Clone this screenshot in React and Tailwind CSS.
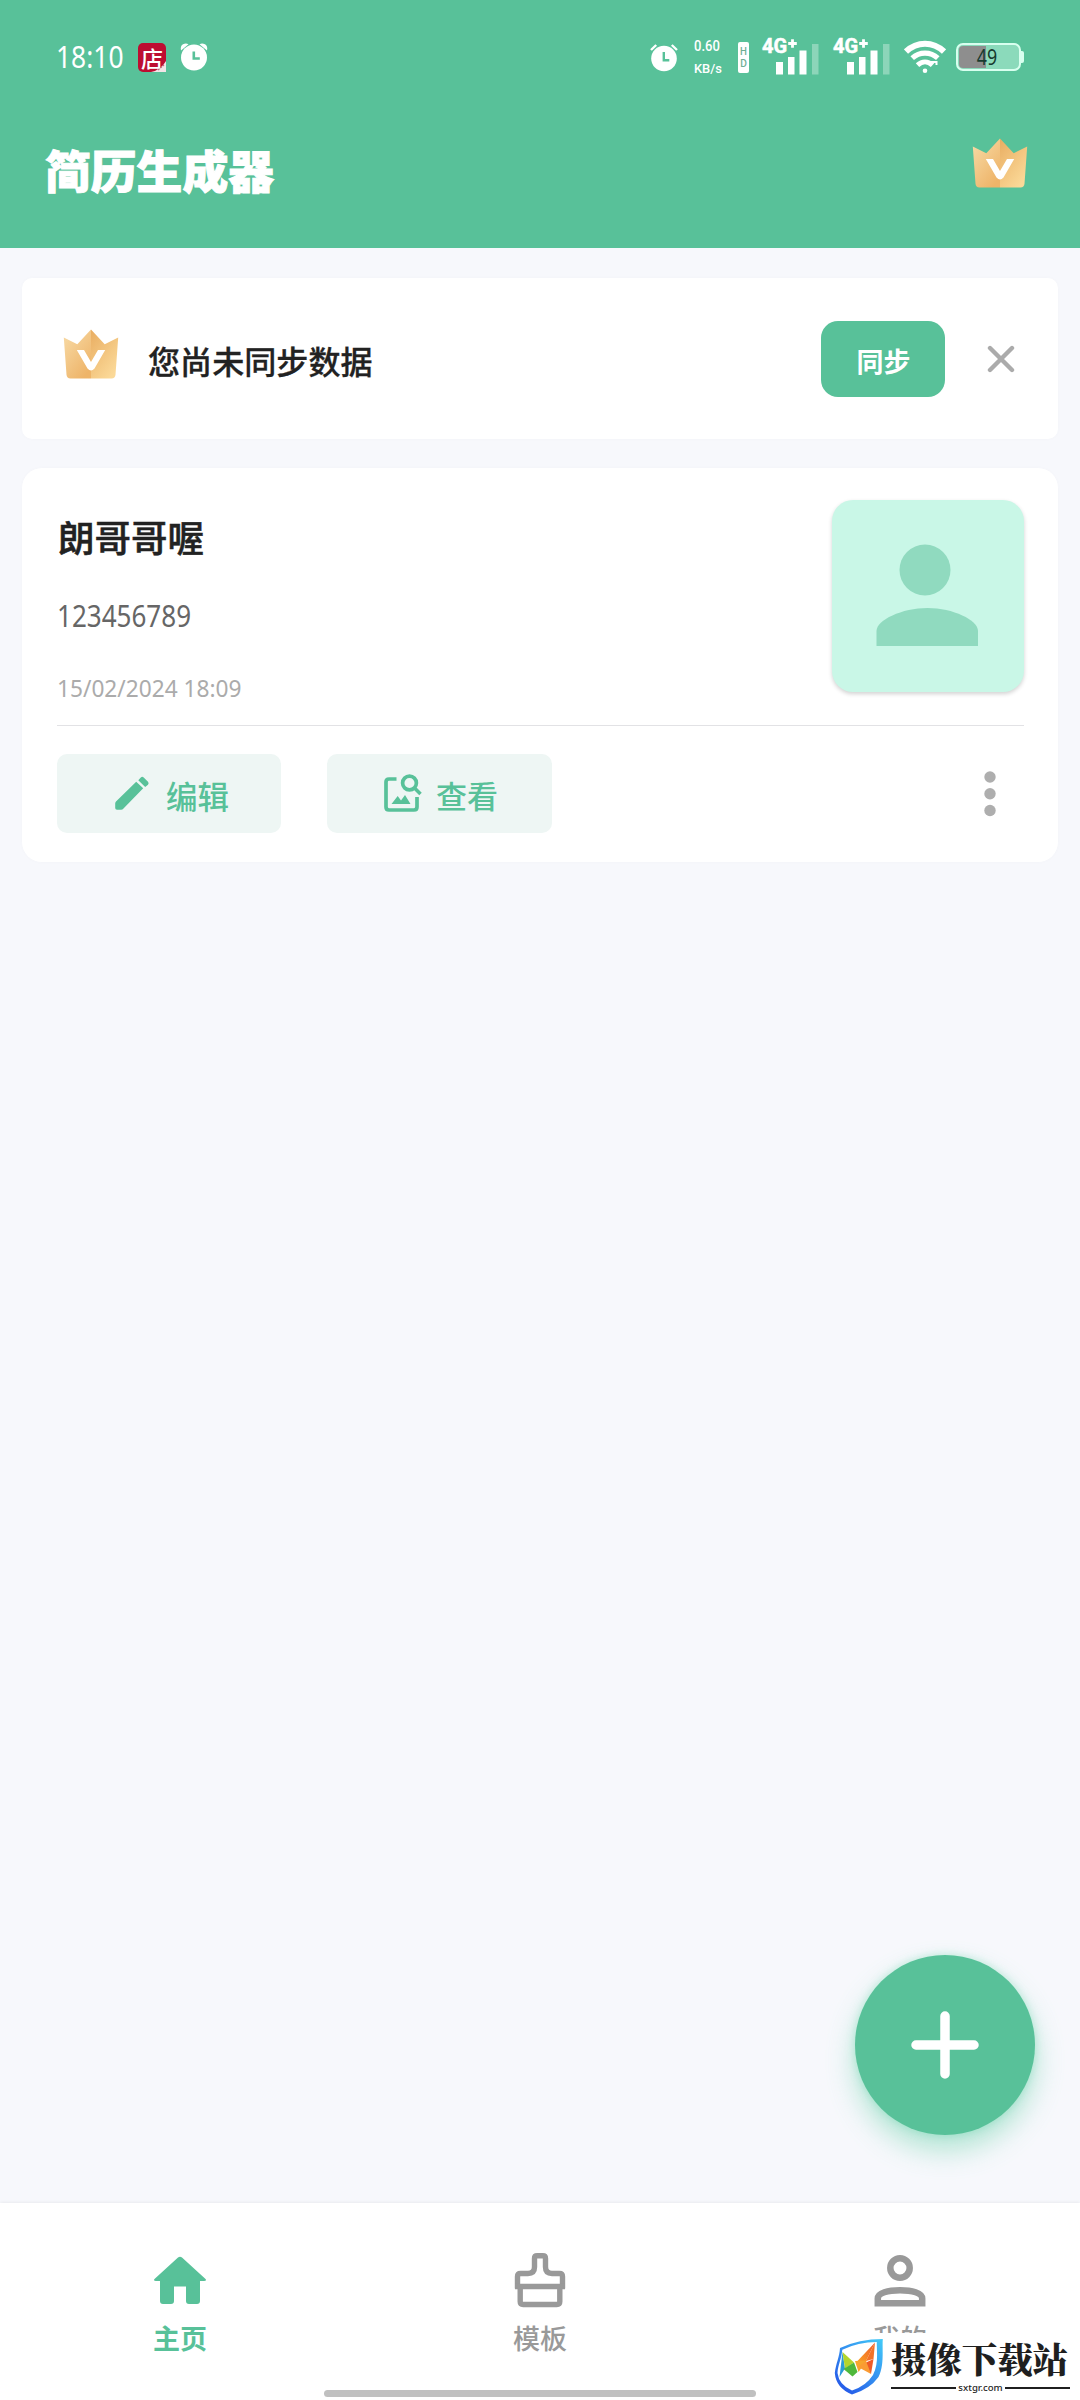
import React, { useId } from "react";

function AlarmIcon({ className }) {
  return (
    <svg viewBox="0 0 28 28" className={className}>
      <path d="M1 7.5 Q0 3 3 1.2 Q6 0 8.5 1.2 Z M27 7.5 Q28 3 25 1.2 Q22 0 19.5 1.2 Z" fill="#fff" />
      <circle cx="14" cy="14.5" r="13" fill="#fff" />
      <path d="M13.8 8.5v7h6" fill="none" stroke="#58c199" strokeWidth="2.6" />
    </svg>
  );
}

function BellAlarmIcon({ className }) {
  return (
    <svg viewBox="0 0 28 28" className={className}>
      <circle cx="14" cy="15" r="12.8" fill="#fff" />
      <path d="M1 6.5 6.2 1.5 M27 6.5 21.8 1.5" stroke="#fff" strokeWidth="2.4" />
      <path d="M13.8 8.5v8.2h5.5" fill="none" stroke="#58c199" strokeWidth="2.4" />
    </svg>
  );
}

function Signal() {
  return (
    <div className="relative h-[36px] w-[57px]">
      <span className="absolute -top-[3px] left-0 font-['Roboto',sans-serif] text-[20px] leading-[20px] font-bold text-white [-webkit-text-stroke:0.5px_white]">
        4G
      </span>
      <svg viewBox="0 0 57 36" className="absolute inset-0 h-full w-full">
        <path d="M30.500 .2v8.600M26.200 4.500h8.600" stroke="#fff" strokeWidth="2.800" />
        <path d="M14 23h7v12.500h-7zM26 18h6.500v17.500h-6.500zM37.500 11.500h7v24h-7z" fill="#fff" />
        <path d="M50 5h6.500v30.500h-6.500z" fill="#fff" opacity=".32" />
      </svg>
    </div>
  );
}

function WifiIcon({ className }) {
  return (
    <svg viewBox="0 0 42 34" className={className} fill="none" stroke="#fff" strokeWidth="6">
      <path d="M2 11.500C13 1 29 1 40 11.500" />
      <path d="M8.200 18.200C15.500 11.500 26.500 11.500 33.800 18.200" strokeWidth="5.200" />
      <path d="M13.500 25.200C18 21 24 21 28.500 25.200" strokeWidth="5" />
      <path d="M27 22h5.500v3" strokeWidth="2" />
      <circle cx="21" cy="30.800" r="2.300" fill="#fff" stroke="none" />
    </svg>
  );
}

function Crown({ className }) {
  const id = useId();
  const left = id + "l";
  const right = id + "r";
  return (
    <svg viewBox="0 0 56 50" className={className}>
      <defs>
        <linearGradient id={left} x1="0" y1="0" x2=".7" y2="1">
          <stop offset="0" stopColor="#f8dca8" />
          <stop offset="1" stopColor="#eeb469" />
        </linearGradient>
        <linearGradient id={right} x1="0" y1="0" x2=".7" y2="1">
          <stop offset="0" stopColor="#e9ad61" />
          <stop offset="1" stopColor="#fbd998" />
        </linearGradient>
      </defs>
      <path d="M28 .5V49.500H7.500Q3.800 49.500 3.500 45.800L.8 8.500 14.300 15.200Z" fill={`url(#${left})`} />
      <path d="M28 .5V49.500H48.500Q52.200 49.500 52.500 45.800L55.200 8.500 41.700 15.200Z" fill={`url(#${right})`} />
      <path d="M13.800 21H21L28 33 35 21H42.200L31.500 39.500Q28 43.500 24.500 39.500Z" fill="#fff" />
    </svg>
  );
}

function StatusBar() {
  return (
    <div className="flex h-[114px] items-center pl-[56px] pr-[56px] text-white">
      <span className="w-[82px] origin-left scale-x-[0.88] whitespace-nowrap font-['Noto_Sans',sans-serif] text-[30px] leading-[42px]">
        18:10
      </span>
      <div className="relative h-[29px] w-[28px] rounded-[5px] bg-[#bd0d31]">
        <span className="absolute left-[3px] top-0 text-[22px] leading-[28px] font-medium">店</span>
        <svg viewBox="0 0 28 29" className="absolute inset-0 h-full w-full">
          <path d="M28 18V29H13Q23 27 28 18Z" fill="#f3e5e7" />
          <path d="M20 27l6-5" stroke="#bd6a7c" strokeWidth="1.200" strokeDasharray="2 1" />
        </svg>
      </div>
      <AlarmIcon className="ml-[14px] h-[28px] w-[28px]" />
      <div className="ml-auto flex items-center">
        <BellAlarmIcon className="h-[29px] w-[28px]" />
        <div className="ml-[16px] flex w-[29px] flex-col whitespace-nowrap font-['Roboto',sans-serif] font-medium">
          <span className="origin-left scale-x-[0.84] text-[15.500px] leading-[22px]">0.60</span>
          <span className="origin-left scale-x-[0.95] text-[13.500px] leading-[22px]">KB/s</span>
        </div>
        <div className="ml-[15px] flex h-[31px] w-[11px] flex-col items-center justify-center rounded-[2px] bg-white text-[10px] leading-[12px] font-medium text-[#6fae96]">
          <span>H</span>
          <span>D</span>
        </div>
        <div className="ml-[13px] flex gap-[14px]">
          <Signal />
          <Signal />
        </div>
        <WifiIcon className="ml-[14px] h-[34px] w-[42px]" />
        <div className="ml-[10px] flex items-center">
          <div className="relative h-[28px] w-[65px] overflow-hidden rounded-[7px] border-2 border-[#d8ffef] bg-[#8bdabb] p-[1px]">
            <div className="h-full w-[27px] rounded-l-[4px] bg-[#8e8e8e]" />
            <span className="absolute inset-0 flex items-center justify-center pr-[3px] font-['Noto_Sans',sans-serif] text-[21px] leading-none text-[#183b2e]">
              <span className="scale-x-[0.85]">49</span>
            </span>
          </div>
          <div className="h-[12px] w-[3px] rounded-r-[2px] bg-[#d8ffef]" />
        </div>
      </div>
    </div>
  );
}

function Watermark() {
  return (
    <div className="absolute bottom-0 right-0 flex h-[67px] w-[248px] bg-white pl-[2px]">
      <svg viewBox="0 0 50 58" className="mt-[4px] h-[58px] w-[50px]">
        <defs>
          <linearGradient id="shield" x1="1" y1="0" x2=".2" y2="1">
            <stop offset="0" stopColor="#43cbf8" />
            <stop offset="1" stopColor="#2557e8" />
          </linearGradient>
          <linearGradient id="flame" x1="0" y1="1" x2="1" y2="0">
            <stop offset="0" stopColor="#f9a125" />
            <stop offset="1" stopColor="#ef562b" />
          </linearGradient>
        </defs>
        <path
          fillRule="evenodd"
          fill="url(#shield)"
          d="M6 11Q25 2 48.800 2C48 13 50.500 28 44.500 40Q36 52 18 57.500 2 51 .8 36C2 26 5.500 20 6 11ZM8.300 12.800C7.500 22 4 28 3.500 36Q5 48 18 53.500 32 49 39 38C45 26 42.500 14 42.800 5Q24 5 8.300 12.800Z"
        />
        <path d="M8.500 15 5.500 40 11 31.500Z" fill="#2b9cd8" />
        <path d="M8.500 15 20 25.500 11 31.500Z" fill="#b4d52c" />
        <path d="M20 25.500 23.500 35 18.500 39.500 9.500 32Z" fill="#4fb83b" />
        <path d="M41 5.500 32 24 23 24.500Z" fill="url(#flame)" />
        <path d="M21 24 33 23.500 24.500 35Z" fill="#f7a52d" />
        <path d="M41 5.500 39.500 22 32 24Z" fill="#f27228" />
        <path d="M39.500 22 37 37 30 26.500Z" fill="#ee5a26" />
        <path d="M32 24 37 37 24 30Z" fill="#fa9b33" />
      </svg>
      <div className="ml-[7px] w-[179px]">
        <div className="mt-[4px] h-[42px] whitespace-nowrap font-['Noto_Serif_CJK_SC','Noto_Sans_CJK_SC',serif] text-[35.400px] leading-[42px] font-black text-[#1f1f1f]">
          摄像下载站
        </div>
        <div className="mt-[2px] flex h-[14px] items-center gap-[2px]">
          <div className="h-[2px] flex-1 bg-[#1f1f1f]" />
          <span className="-mt-[1px] font-['Noto_Sans',sans-serif] text-[9.600px] leading-[14px] font-medium text-[#1f1f1f]">sxtgr.com</span>
          <div className="h-[2px] flex-1 bg-[#1f1f1f]" />
        </div>
      </div>
    </div>
  );
}

export default function App() {
  return (
    <div className="relative flex h-[2400px] w-[1080px] flex-col overflow-hidden bg-[#f7f8fc] font-['Noto_Sans_CJK_SC',sans-serif]">
      <header className="h-[248px] bg-[#58c199]">
        <StatusBar />
        <div className="flex items-start justify-between pl-[45px] pr-[52px]">
          <h1 className="mt-[21px] text-[45.800px] leading-[68px] font-black text-white [-webkit-text-stroke:1px_white]">
            简历生成器
          </h1>
          <Crown className="mt-[24px] h-[50px] w-[56px]" />
        </div>
      </header>

      <main className="relative flex-1 px-[22px] pt-[30px]">
        <section className="flex h-[161px] items-start rounded-[10px] bg-white pl-[41px] pr-[43px] shadow-[0_0_4px_rgba(0,0,0,0.02)]">
          <Crown className="mt-[51px] h-[50px] w-[56px]" />
          <p className="ml-[29px] mt-[58px] text-[32.100px] leading-[48px] font-medium text-[#222] [-webkit-text-stroke:0.3px_#222]">
            您尚未同步数据
          </p>
          <button className="ml-auto mt-[43px] h-[76px] w-[124px] rounded-[17px] bg-[#58c199] pl-[1px] pt-[3px] text-[27px] leading-[73px] font-bold text-white">
            同步
          </button>
          <svg viewBox="0 0 28 28" className="ml-[42px] mt-[67px] h-[28px] w-[28px]">
            <path d="M3 3 25 25M25 3 3 25" stroke="#ababab" strokeWidth="4.400" strokeLinecap="round" />
          </svg>
        </section>

        <section className="mt-[29px] h-[394px] rounded-[20px] bg-white pl-[35px] pr-[34px] shadow-[0_0_4px_rgba(0,0,0,0.02)]">
          <div className="flex h-[258px] justify-between border-b border-[#e2e2e5]">
            <div className="pt-[42px]">
              <h2 className="pl-[1px] text-[36.500px] leading-[54px] font-medium text-[#222] [-webkit-text-stroke:0.5px_#222]">
                朗哥哥喔
              </h2>
              <p className="mt-[30px] origin-left scale-x-[0.868] font-['Noto_Sans',sans-serif] text-[30px] leading-[44px] text-[#666]">
                123456789
              </p>
              <p className="mt-[32px] origin-left scale-x-[0.945] font-['Noto_Sans',sans-serif] text-[24px] leading-[36px] text-[#ababab]">
                15/02/2024 18:09
              </p>
            </div>
            <div className="mt-[32px] h-[192px] w-[192px] rounded-[21px] bg-[#c9f7e7] shadow-[0_2px_4px_rgba(0,0,0,0.18)]">
              <svg viewBox="0 0 192 192" className="h-full w-full" fill="#90dabf">
                <circle cx="93" cy="70" r="25.500" />
                <path d="M44.500 146V131C44.500 120 70 108 95.500 108S146 120 146 131V146Z" />
              </svg>
            </div>
          </div>
          <div className="flex items-start pt-[28px] text-[#58c199]">
            <button className="flex h-[79px] w-[224px] items-start rounded-[10px] bg-[#eef6f4] pl-[57px]">
              <svg viewBox="0 0 36 36" className="mt-[21px] h-[36px] w-[36px]" fill="#58c199">
                <path d="M22.200 6.800 29.200 13.200 9.500 33.500Q8.500 34.800 7 34.800H3Q1.200 34.800 1.200 33V28.500Q1.200 27.500 2 26.500Z" />
                <path d="M24.300 5.200 26.800 2.500Q28.200 1 29.700 2.500L34 6.800Q35.300 8.300 34 9.700L31.200 12Z" />
              </svg>
              <span className="ml-[16px] mt-[18px] text-[31.500px] leading-[46px] font-medium">编辑</span>
            </button>
            <button className="ml-[46px] flex h-[79px] w-[225px] items-start rounded-[10px] bg-[#eef6f4] pl-[56px]">
              <svg viewBox="0 0 40 40" className="mt-[19px] h-[40px] w-[40px]" fill="none" stroke="#58c199" strokeWidth="3.700">
                <path d="M13.500 6H6Q3 6 3 9V34Q3 37 6 37H31Q34 37 34 34V24" />
                <circle cx="26.500" cy="10" r="6.900" />
                <path d="M31 14.500 37.500 21" strokeWidth="3.500" />
                <path d="M8.500 31 14.700 23 18 27.500 22 22 27.500 31Z" fill="#58c199" stroke="none" />
              </svg>
              <span className="ml-[13px] mt-[18px] text-[31px] leading-[46px] font-medium">查看</span>
            </button>
            <svg viewBox="0 0 12 46" className="ml-auto mr-[28.500px] mt-[17px] h-[46px] w-[12px]" fill="#aeaeae">
              <circle cx="6" cy="6" r="5.700" />
              <circle cx="6" cy="22.800" r="5.700" />
              <circle cx="6" cy="39.500" r="5.700" />
            </svg>
          </div>
        </section>

        <button className="absolute bottom-[68px] right-[45px] flex h-[180px] w-[180px] items-center justify-center rounded-full bg-[#58c199] shadow-[0_15px_28px_rgba(88,205,160,0.45),0_0_8px_rgba(88,211,163,0.35)]">
          <svg viewBox="0 0 68 68" className="h-[68px] w-[68px]">
            <path d="M34 5V63M5 34H63" stroke="#fff" strokeWidth="9.500" strokeLinecap="round" />
          </svg>
        </button>
      </main>

      <nav className="relative grid h-[197px] grid-cols-3 bg-white text-[27px] leading-[40px] font-medium text-[#999] shadow-[0_-1px_3px_rgba(0,0,0,0.06)]">
        <div className="flex flex-col items-center pt-[53px] text-[#58c199]">
          <svg viewBox="0 0 54 50" className="h-[50px] w-[54px]" fill="#58c199">
            <path d="M25 1.600Q27 0 29 1.600L52.500 23Q54 25 51 25H47V45Q47 48 44 48H36Q33 48 33 45V30.500H21V45Q21 48 18 48H10Q7 48 7 45V25H3Q0 25 1.500 23Z" />
          </svg>
          <span className="mt-[12px] font-bold">主页</span>
        </div>
        <div className="flex flex-col items-center pt-[49px]">
          <svg viewBox="0 0 52 58" className="h-[58px] w-[52px]" fill="none" stroke="#999" strokeWidth="5.400">
            <path d="M3.500 36.500V24.500Q3.500 21.500 6.500 21.500H14Q20.500 21.500 20.500 15V6.500Q20.500 3.800 23.200 3.800H28.800Q31.500 3.800 31.500 6.500V15Q31.500 21.500 38 21.500H45.500Q48.500 21.500 48.500 24.500V36.500" />
            <path d="M1 34.500H51M6.200 35V49.500Q6.200 52.500 9.200 52.500H42.800Q45.800 52.500 45.800 49.500V35" />
          </svg>
          <span className="mt-[8px]">模板</span>
        </div>
        <div className="flex flex-col items-center pt-[51px]">
          <svg viewBox="0 0 52 54" className="h-[54px] w-[52px]" fill="none" stroke="#999" strokeWidth="6.500">
            <circle cx="26" cy="14" r="9.700" />
            <path d="M3.800 49.200V44.500C3.800 39 14 36.200 26 36.200S48.200 39 48.200 44.500V49.200Z" />
          </svg>
          <span className="mt-[10px]">我的</span>
        </div>
        <div className="absolute bottom-[3px] left-[324px] h-[7px] w-[432px] rounded-full bg-[#c0c0c0]" />
        <Watermark />
      </nav>
    </div>
  );
}
